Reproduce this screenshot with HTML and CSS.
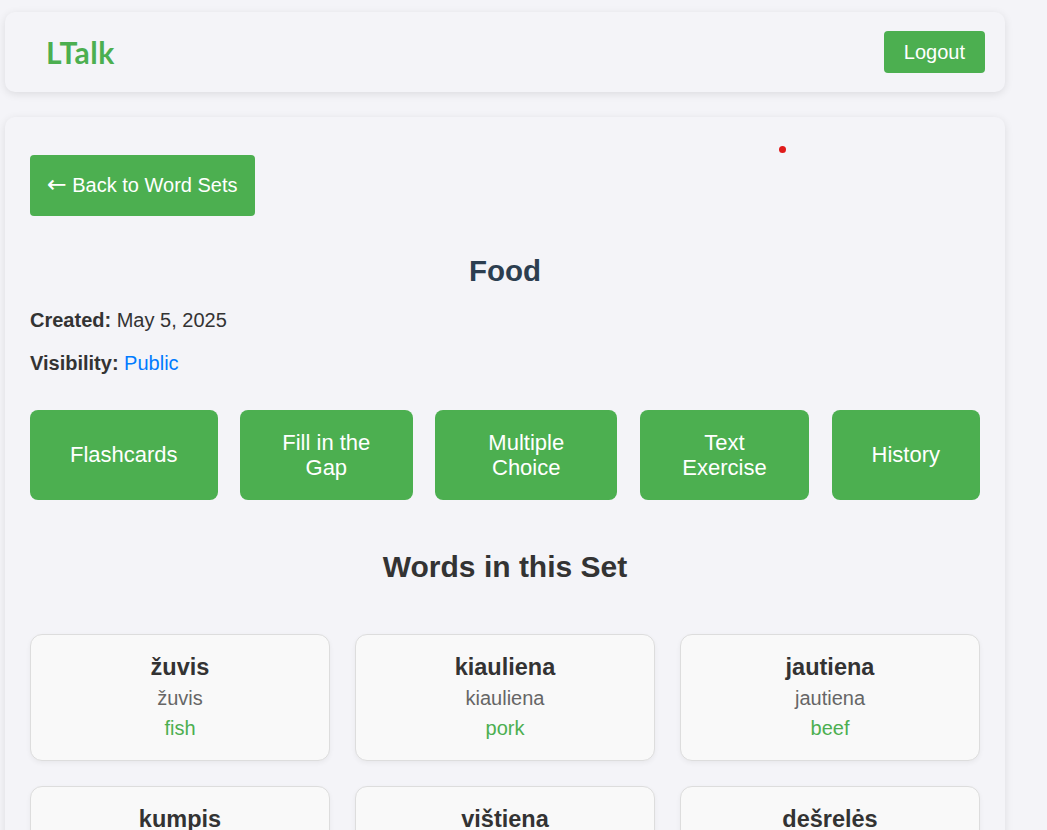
FILE: index.html
```html
<!DOCTYPE html>
<html lang="lt">
<head>
<meta charset="utf-8">
<title>LTalk - Food</title>
<link rel="stylesheet" href="styles.css">
</head>
<body>
<div class="page">
  <header class="header">
    <div class="logo">LTalk</div>
    <button class="logout">Logout</button>
  </header>

  <main class="main">
    <span class="dot"></span>
    <button class="back"><span class="arrow">←</span> Back to Word Sets</button>

    <h2 class="set-title">Food</h2>
    <p class="info"><strong>Created:</strong> May 5, 2025</p>
    <p class="info"><strong>Visibility:</strong> <span class="public">Public</span></p>

    <div class="modes">
      <button class="mode">Flashcards</button>
      <button class="mode">Fill in the Gap</button>
      <button class="mode">Multiple Choice</button>
      <button class="mode">Text Exercise</button>
      <button class="mode">History</button>
    </div>

    <h2 class="words-title">Words in this Set</h2>

    <div class="words">
      <div class="word-card">
        <h3 class="word">žuvis</h3>
        <p class="pron">žuvis</p>
        <p class="trans">fish</p>
      </div>
      <div class="word-card">
        <h3 class="word">kiauliena</h3>
        <p class="pron">kiauliena</p>
        <p class="trans">pork</p>
      </div>
      <div class="word-card">
        <h3 class="word">jautiena</h3>
        <p class="pron">jautiena</p>
        <p class="trans">beef</p>
      </div>
      <div class="word-card">
        <h3 class="word">kumpis</h3>
        <p class="pron">kumpis</p>
        <p class="trans">ham</p>
      </div>
      <div class="word-card">
        <h3 class="word">vištiena</h3>
        <p class="pron">vištiena</p>
        <p class="trans">chicken</p>
      </div>
      <div class="word-card">
        <h3 class="word">dešrelės</h3>
        <p class="pron">dešrelės</p>
        <p class="trans">sausages</p>
      </div>
    </div>
  </main>
</div>
</body>
</html>
```

FILE: styles.css
```css
* {
  box-sizing: border-box;
}

body {
  margin: 0;
  background: #f4f4f8;
  font-family: "Liberation Sans", Arial, sans-serif;
  color: #333;
}

.page {
  width: 1000px;
  margin-left: 5px;
  padding-top: 12px;
}

.header {
  display: flex;
  align-items: center;
  justify-content: space-between;
  height: 80px;
  padding: 0 20px 0 41px;
  background: #f4f4f8;
  border-radius: 10px;
  box-shadow: 0 2px 8px rgba(0, 0, 0, 0.1);
}

.logo {
  font-family: Lato, "Open Sans", sans-serif;
  font-weight: 700;
  font-size: 30px;
  letter-spacing: 0.5px;
  color: #4caf50;
}

.logout {
  border: none;
  background: #4caf50;
  color: #fff;
  font-family: "Liberation Sans", Arial, sans-serif;
  font-size: 20px;
  line-height: 23px;
  padding: 10px 20px 9px;
  border-radius: 4px;
}

.main {
  position: relative;
  margin-top: 25px;
  padding: 38px 25px 25px;
  background: #f4f4f8;
  border-radius: 10px;
  box-shadow: 0 2px 8px rgba(0, 0, 0, 0.1);
}

.dot {
  position: absolute;
  left: 774px;
  top: 29px;
  width: 7px;
  height: 7px;
  border-radius: 50%;
  background: #e01b1b;
}

.back {
  display: inline-block;
  border: none;
  background: #4caf50;
  color: #fff;
  font-family: "Liberation Sans", Arial, sans-serif;
  font-size: 20px;
  line-height: 23px;
  padding: 19px 17px;
  border-radius: 4px;
}

.arrow {
  font-family: "DejaVu Sans", sans-serif;
  font-size: 23.5px;
  line-height: 20px;
}

.set-title {
  margin: 38px 0 21px;
  text-align: center;
  font-size: 29.5px;
  line-height: 34px;
  color: #2c3e50;
}

.info {
  margin: 0 0 20px;
  font-size: 20px;
  line-height: 23px;
}

.info + .info {
  margin-bottom: 35px;
}

.public {
  color: #007bff;
}

.modes {
  display: flex;
  gap: 22.5px;
}

.mode {
  flex: 1 1 auto;
  display: flex;
  align-items: center;
  justify-content: center;
  text-align: center;
  border: none;
  background: #4caf50;
  color: #fff;
  font-family: "Liberation Sans", Arial, sans-serif;
  font-size: 22px;
  line-height: 25.5px;
  padding: 19.5px 40px;
  border-radius: 8px;
}

.words-title {
  margin: 50px 0 50px;
  text-align: center;
  font-size: 30px;
  line-height: 34px;
  color: #333;
}

.words {
  display: grid;
  grid-template-columns: repeat(3, 1fr);
  gap: 25px;
}

.word-card {
  background: #f9f9f9;
  border: 1px solid #ddd;
  border-radius: 12px;
  padding: 19px 20px 20px;
  text-align: center;
  box-shadow: 0 2px 5px rgba(0, 0, 0, 0.05);
}

.word {
  margin: 0 0 6px;
  font-size: 23.5px;
  line-height: 27px;
  color: #333;
}

.pron {
  margin: 0 0 7px;
  font-size: 20px;
  line-height: 23px;
  color: #666;
}

.trans {
  margin: 0;
  font-size: 20px;
  line-height: 23px;
  color: #4caf50;
}
```
